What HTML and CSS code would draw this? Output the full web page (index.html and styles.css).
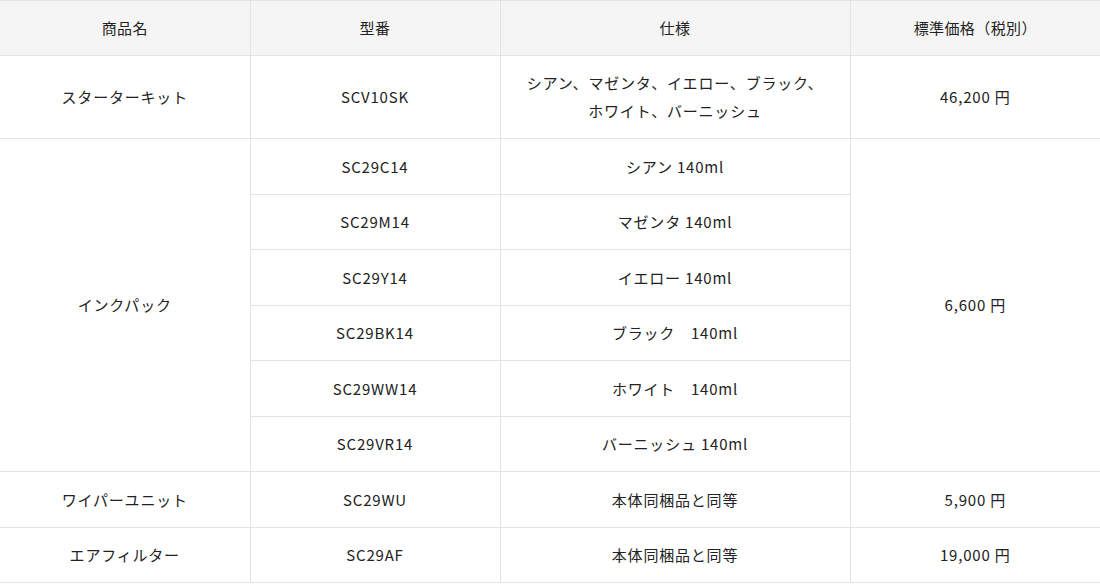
FILE: index.html
```html
<!DOCTYPE html>
<html lang="ja">
<head>
<meta charset="utf-8">
<link rel="stylesheet" href="styles.css">
</head>
<body>
<table class="spec">
  <colgroup>
    <col class="c1"><col class="c2"><col class="c3"><col class="c4">
  </colgroup>
  <thead>
    <tr><th>商品名</th><th>型番</th><th>仕様</th><th>標準価格（税別）</th></tr>
  </thead>
  <tbody>
    <tr>
      <td>スターターキット</td>
      <td>SCV10SK</td>
      <td>シアン、マゼンタ、イエロー、ブラック、<br>ホワイト、バーニッシュ</td>
      <td>46,200 円</td>
    </tr>
    <tr>
      <td rowspan="6">インクパック</td>
      <td>SC29C14</td>
      <td>シアン 140ml</td>
      <td rowspan="6">6,600 円</td>
    </tr>
    <tr><td>SC29M14</td><td>マゼンタ 140ml</td></tr>
    <tr><td>SC29Y14</td><td>イエロー 140ml</td></tr>
    <tr><td>SC29BK14</td><td>ブラック　140ml</td></tr>
    <tr><td>SC29WW14</td><td>ホワイト　140ml</td></tr>
    <tr><td>SC29VR14</td><td>バーニッシュ 140ml</td></tr>
    <tr>
      <td>ワイパーユニット</td>
      <td>SC29WU</td>
      <td>本体同梱品と同等</td>
      <td>5,900 円</td>
    </tr>
    <tr>
      <td>エアフィルター</td>
      <td>SC29AF</td>
      <td>本体同梱品と同等</td>
      <td>19,000 円</td>
    </tr>
  </tbody>
</table>
</body>
</html>
```
FILE: styles.css
```css
html, body {
  margin: 0;
  padding: 0;
  background: #ffffff;
}
body {
  font-family: "Noto Sans CJK JP", "Noto Sans", sans-serif;
  font-size: 15px;
  color: #222222;
}
.spec {
  width: 1100px;
  border-collapse: collapse;
  table-layout: fixed;
}
.c1, .c2, .c4 { width: 250px; }
.c3 { width: 350px; }
.spec th, .spec td {
  text-align: center;
  vertical-align: middle;
  font-weight: normal;
  line-height: 28px;
  padding: 13.5px 10px 13px;
  border: 1px solid #e3e3e3;
}
.spec td {
  letter-spacing: 0.8px;
}
.spec th {
  background: #f5f5f5;
  letter-spacing: 0.4px;
  padding: 12.5px 10px 13px;
}
.spec tr > :first-child { border-left: none; }
.spec tr > :last-child { border-right: none; }
.spec td[rowspan] + td { border-left: 1px solid #e3e3e3; }
```
